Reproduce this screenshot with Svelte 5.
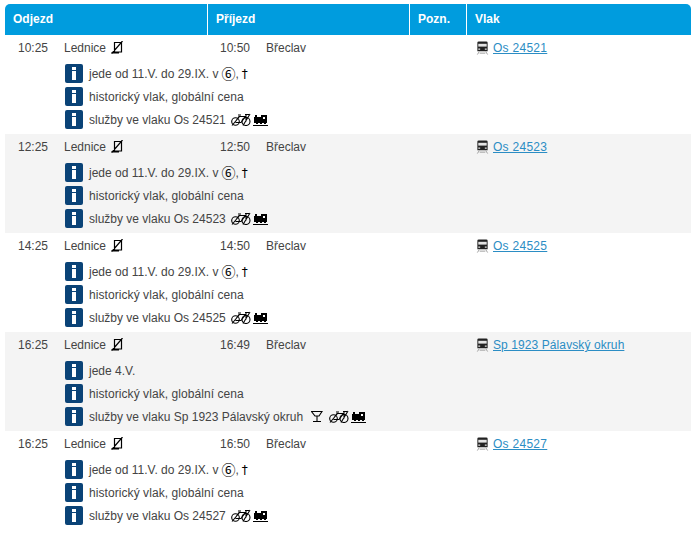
<script>
  const rows = [
    { dep: '10:25', arr: '10:50', train: 'Os 24521', note: 'jede od 11.V. do 29.IX. v', sym: true, rest: false },
    { dep: '12:25', arr: '12:50', train: 'Os 24523', note: 'jede od 11.V. do 29.IX. v', sym: true, rest: false },
    { dep: '14:25', arr: '14:50', train: 'Os 24525', note: 'jede od 11.V. do 29.IX. v', sym: true, rest: false },
    { dep: '16:25', arr: '16:49', train: 'Sp 1923 Pálavský okruh', note: 'jede 4.V.', sym: false, rest: true },
    { dep: '16:25', arr: '16:50', train: 'Os 24527', note: 'jede od 11.V. do 29.IX. v', sym: true, rest: false }
  ];
</script>

{#snippet info()}
  <svg class="info" width="18" height="19" viewBox="0 0 18 19" aria-hidden="true">
    <rect width="18" height="19" rx="2" fill="#0a4377" />
    <rect x="7" y="3" width="4" height="3" fill="#fff" />
    <rect x="7" y="7" width="4" height="9" fill="#fff" />
  </svg>
{/snippet}

{#snippet services()}
  <svg class="sv" width="20" height="13" viewBox="0 0 20 13" fill="none" stroke="#000" stroke-width="1.100" aria-hidden="true">
    <circle cx="4.500" cy="8.500" r="3.800" />
    <circle cx="15" cy="8.500" r="4" />
    <path d="M4.500 8.500 8 3.500h6.500L10 9.500H4.500M7 2h3M14 1.500h4M15 1.500v7M1 12.500 9 3M12 12.500 19 1" />
  </svg>
  <svg class="sv" width="15" height="12" viewBox="0 0 15 12" aria-hidden="true">
    <path d="M1 3h1V1h2v2h4V1h6v8H1z" fill="#000" />
    <rect x="10" y="3" width="2" height="2" fill="#fff" />
    <rect x="3" y="9" width="2" height="1" fill="#000" />
    <rect x="7" y="9" width="2" height="1" fill="#000" />
    <rect x="11" y="9" width="2" height="1" fill="#000" />
    <rect y="11" width="15" height="1" fill="#000" />
  </svg>
{/snippet}

<div class="board">
  <div class="head">
    <div class="h">Odjezd</div>
    <div class="h">Příjezd</div>
    <div class="h">Pozn.</div>
    <div class="h">Vlak</div>
  </div>

  {#each rows as r, i}
    <div class="row" class:alt={i % 2 === 1}>
      <div class="main">
        <span class="time">{r.dep}</span>
        <span class="stop">Lednice
          <svg class="nowheel" width="12" height="13" viewBox="0 0 12 13" fill="none" stroke="#000" stroke-width="1.200" aria-hidden="true">
            <path d="M3.500 1.500h7v9.500h-7zM0 12h8M11.500 0 .8 12.500" />
          </svg>
        </span>
        <span class="time arr">{r.arr}</span>
        <span class="stop">Břeclav</span>
        <span class="vlak">
          <svg class="loco" width="13" height="14" viewBox="0 0 13 15" aria-hidden="true">
            <path d="M1 2Q1 .5 2.500 .5h8Q12 .5 12 2v9H1z" fill="#222" />
            <rect x="2" y="3" width="9" height="3" fill="#e4e4e4" />
            <rect x="2" y="8" width="2" height="1.500" fill="#ccc" />
            <rect x="9" y="8" width="2" height="1.500" fill="#ccc" />
            <path d="M3 11.500 1 14.500M10 11.500l2 3M3.500 13h6" stroke="#999" fill="none" />
          </svg>
          <a href="#top" class:wide={r.train.length < 10}>{r.train}</a>
        </span>
      </div>
      <div class="line">
        {@render info()}
        <span>{r.note}</span>
        {#if r.sym}
          <span class="circled">⑥</span><span>,</span><span class="dagger">†</span>
        {/if}
      </div>
      <div class="line">
        {@render info()}
        <span class="hist">historický vlak, globální cena</span>
      </div>
      <div class="line">
        {@render info()}
        <span class="svc">služby ve vlaku {r.train}</span>
        {#if r.rest}
          <svg class="sv glass" width="12" height="11" viewBox="0 0 12 11" fill="none" stroke="#000" stroke-width="1.100" aria-hidden="true">
            <path d="M.5 .5h10.500L8 5H4zM6 5V10M2 10.500h8" />
          </svg>
        {/if}
        {@render services()}
      </div>
    </div>
  {/each}
</div>

<style>
  :global(body) {
    margin: 0;
    background: #fff;
  }
  .board {
    margin: 4px 4px 0 5px;
    font: 12px/14px "Liberation Sans", Arial, sans-serif;
    color: #444;
  }
  .head {
    display: grid;
    grid-template-columns: 202px 201px 56px 1fr;
    column-gap: 1px;
    height: 31px;
    border-radius: 5px 5px 0 0;
    overflow: hidden;
  }
  .h {
    background: #009cde;
    color: #fff;
    font-weight: 700;
    line-height: 31px;
    padding-left: 8px;
  }
  .row {
    height: 99px;
    box-sizing: border-box;
    padding-top: 6px;
  }
  .alt {
    background: #f4f4f4;
  }
  .main {
    display: grid;
    grid-template-columns: 59px 156px 46px 210px 1fr;
    grid-template-rows: 14px;
    height: 14px;
    margin-bottom: 7px;
  }
  .time {
    padding-left: 13px;
  }
  .time.arr {
    padding-left: 0;
  }
  .stop {
    display: flex;
    align-items: center;
    gap: 5px;
    white-space: nowrap;
  }
  .nowheel {
    margin: -1px 0 0;
    flex: none;
  }
  .vlak {
    display: flex;
    align-items: center;
    gap: 4px;
    white-space: nowrap;
  }
  .loco {
    flex: none;
  }
  a {
    color: #2b8dc4;
    text-decoration: underline;
    letter-spacing: 0.09px;
  }
  a.wide {
    letter-spacing: 0.28px;
  }
  .line {
    display: flex;
    align-items: center;
    height: 23px;
    padding-left: 60px;
    white-space: nowrap;
  }
  .info {
    flex: none;
    margin-right: 6px;
  }
  .hist {
    letter-spacing: 0.07px;
  }
  .circled {
    color: #000;
    font: 14px/14px "Noto Sans CJK JP", sans-serif;
    margin: 0 0 2px 3px;
  }
  .dagger {
    color: #000;
    font-family: "DejaVu Sans", sans-serif;
    margin-left: 3px;
  }
  .sv {
    flex: none;
    margin-left: 2px;
  }
  .svc {
    margin-right: 3px;
  }
  .glass {
    margin: 0 4px 0 5px;
  }
</style>
